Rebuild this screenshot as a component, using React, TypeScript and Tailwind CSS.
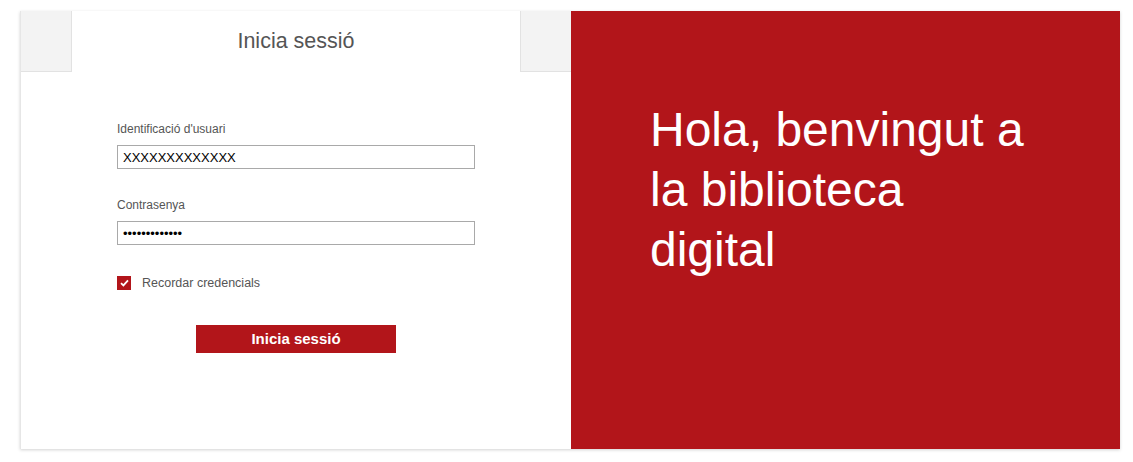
import { useState } from "react";

export default function App() {
  const [user, setUser] = useState("XXXXXXXXXXXXX");
  const [password, setPassword] = useState("abcdefghijklm");
  const [remember, setRemember] = useState(true);

  return (
    <main className="min-h-screen bg-white pt-[11px] pl-[20px] font-['Liberation_Sans',Arial,sans-serif]">
      <div className="flex h-[438px] w-[1100px] shadow-[0_1px_3px_rgba(0,0,0,0.18)]">
        <section className="flex w-[551px] flex-col border-l border-[#e6e6e6] bg-white">
          <div className="flex h-[61px]">
            <div className="w-[51px] border-r border-b border-[#e2e2e2] bg-[#f3f3f3]" />
            <div className="flex flex-1 items-center justify-center text-[21.5px] text-[#555]">Inicia sessió</div>
            <div className="w-[51px] border-l border-b border-[#e2e2e2] bg-[#f3f3f3]" />
          </div>

          <form
            className="flex flex-col pt-[49px] pl-[96px]"
            onSubmit={(e) => e.preventDefault()}
          >
            <label className="text-[12px] leading-[16px] text-[#555]">Identificació d&apos;usuari</label>
            <input
              className="mt-[8px] h-[24px] w-[358px] border border-[#a9a9a9] px-[5px] text-[13px] text-black outline-none"
              value={user}
              onChange={(e) => setUser(e.target.value)}
            />

            <label className="mt-[28px] text-[12px] leading-[16px] text-[#555]">Contrasenya</label>
            <input
              type="password"
              className="mt-[8px] h-[24px] w-[358px] border border-[#a9a9a9] px-[5px] text-[13px] text-black outline-none"
              value={password}
              onChange={(e) => setPassword(e.target.value)}
            />

            <button
              type="button"
              className="mt-[29px] flex items-center gap-[11px] self-start"
              onClick={() => setRemember(!remember)}
            >
              <span className="flex h-[14px] w-[14px] items-center justify-center bg-[#b2151a]">
                {remember && (
                  <svg width="9" height="8" viewBox="0 0 9 8">
                    <path d="M1 4.2 L3.4 6.4 L8 1.4" fill="none" stroke="white" strokeWidth="1.8" />
                  </svg>
                )}
              </span>
              <span className="text-[12.5px] text-[#555]">Recordar credencials</span>
            </button>

            <button
              type="submit"
              className="mt-[32px] ml-[79px] h-[28px] w-[200px] bg-[#b2151a] text-[15px] font-bold text-white"
            >
              Inicia sessió
            </button>
          </form>
        </section>

        <section className="flex-1 bg-[#b2151a] pt-[89px] pl-[79px]">
          <h1 className="w-[390px] text-[48px] leading-[60px] text-white">
            Hola, benvingut a la biblioteca digital
          </h1>
        </section>
      </div>
    </main>
  );
}
